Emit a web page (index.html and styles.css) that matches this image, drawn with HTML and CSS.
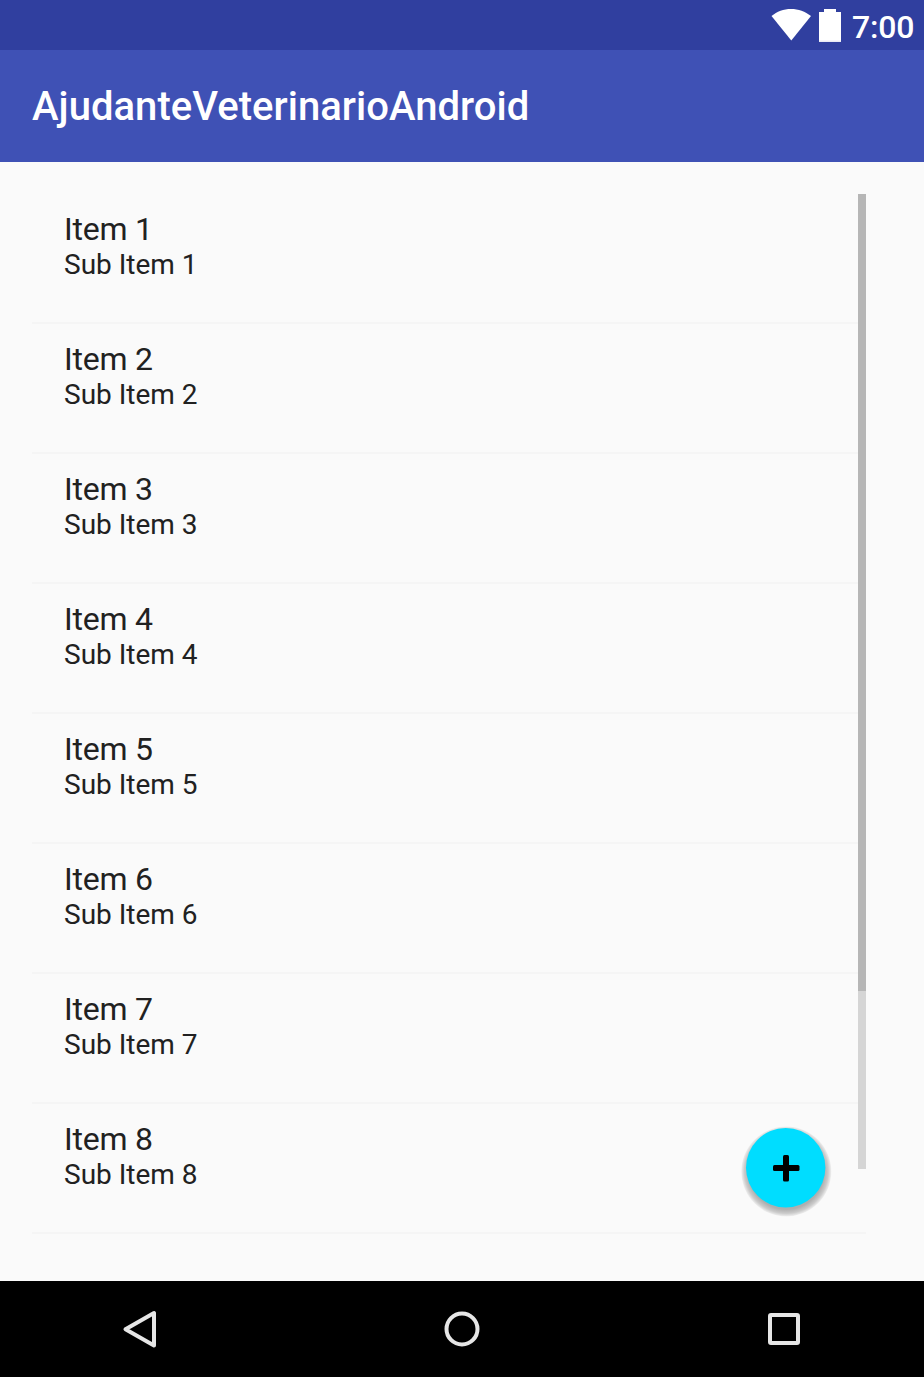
FILE: index.html
```html
<!DOCTYPE html>
<html lang="pt">
<head>
<meta charset="utf-8">
<title>AjudanteVeterinarioAndroid</title>
<link rel="stylesheet" href="styles.css">
</head>
<body>
<div class="screen">
  <div class="status-bar">
    <svg class="wifi" width="40" height="32" viewBox="0 0 40 32"><path d="M0.500 7C6 2.500 12.500 0 20 0S34 2.500 40 7L20.300 31.500Z" fill="#fff"/></svg>
    <svg class="battery" width="22" height="33" viewBox="0 0 22 33"><path d="M0 3H5V0H17V3H22V33H0Z" fill="#fff"/><path d="M0 31.500H22V33H0Z" fill="#e8e9f3"/></svg>
    <span class="clock">7:00</span>
  </div>
  <header class="app-bar"><h1 class="title">AjudanteVeterinarioAndroid</h1></header>
  <main class="content">
    <ul class="list">
      <li class="item"><span class="name">Item 1</span><span class="sub">Sub Item 1</span></li>
      <li class="item"><span class="name">Item 2</span><span class="sub">Sub Item 2</span></li>
      <li class="item"><span class="name">Item 3</span><span class="sub">Sub Item 3</span></li>
      <li class="item"><span class="name">Item 4</span><span class="sub">Sub Item 4</span></li>
      <li class="item"><span class="name">Item 5</span><span class="sub">Sub Item 5</span></li>
      <li class="item"><span class="name">Item 6</span><span class="sub">Sub Item 6</span></li>
      <li class="item"><span class="name">Item 7</span><span class="sub">Sub Item 7</span></li>
      <li class="item"><span class="name">Item 8</span><span class="sub">Sub Item 8</span></li>
    </ul>
    <div class="scrollbar"><div class="thumb"></div></div>
    <button class="fab" aria-label="Adicionar">
      <svg class="fab-art" width="80" height="80" viewBox="0 0 80 80">
        <defs>
          <radialGradient id="shade" gradientUnits="userSpaceOnUse" cx="40.300" cy="43.500" r="45">
            <stop offset="0.840" stop-opacity="0.300"/>
            <stop offset="0.930" stop-opacity="0.190"/>
            <stop offset="1" stop-opacity="0.040"/>
          </radialGradient>
        </defs>
        <circle cx="40.300" cy="43.500" r="45" fill="url(#shade)"/>
        <circle cx="39.700" cy="39.700" r="39.700" fill="#0df"/>
        <rect x="37" y="27" width="6" height="26.500" rx="1.500"/>
        <rect x="27" y="37" width="26.500" height="6" rx="1.500"/>
      </svg>
    </button>
  </main>
  <nav class="nav-bar">
    <svg class="nav-icon" width="40" height="44" viewBox="0 0 40 44"><path d="M34 6V38.500L5.500 22.300Z"/></svg>
    <svg class="nav-icon" width="40" height="44" viewBox="0 0 40 44"><circle cx="20" cy="22" r="15.500"/></svg>
    <svg class="nav-icon" width="40" height="44" viewBox="0 0 40 44"><rect x="6" y="8" width="28" height="28" rx="1"/></svg>
  </nav>
</div>
</body>
</html>
```
FILE: styles.css
```css
* { box-sizing: border-box; }
body { margin: 0; font-family: Roboto, sans-serif; }
.screen {
  display: flex;
  flex-direction: column;
  width: 924px;
  height: 1377px;
  overflow: hidden;
  background: #fafafa;
}
.status-bar {
  display: flex;
  justify-content: flex-end;
  align-items: flex-start;
  height: 50px;
  padding: 9px 9px 0 0;
  background: #303f9f;
  color: #fff;
}
.battery { margin: 0 11px 0 8px; }
.clock {
  width: 63px;
  font-size: 32px;
  line-height: 36px;
  font-weight: 500;
  letter-spacing: -0.2px;
}
.app-bar {
  display: flex;
  align-items: center;
  height: 112px;
  padding: 2px 0 0 32px;
  background: #3f51b5;
  color: #fff;
}
.title {
  margin: 0;
  font-size: 40px;
  line-height: 48px;
  font-weight: 500;
  letter-spacing: 0.04px;
}
.content {
  position: relative;
  display: flex;
  flex: 1;
  padding: 32px 58px 0 32px;
}
.list {
  flex: 1;
  margin: 0;
  padding: 0;
  list-style: none;
}
.item {
  display: flex;
  flex-direction: column;
  height: 130px;
  padding: 16px 32px 0;
  border-bottom: 2px solid #f5f5f5;
  color: #212121;
}
.name { font-size: 32px; line-height: 38px; letter-spacing: -0.22px; }
.sub { font-size: 28px; line-height: 33px; }
.scrollbar {
  position: absolute;
  top: 32px;
  right: 58px;
  width: 8px;
  height: 975px;
  background: #d5d5d5;
}
.thumb { height: 797px; background: #b6b6b6; }
.fab {
  position: absolute;
  top: 966px;
  left: 746px;
  display: flex;
  width: 80px;
  height: 80px;
  padding: 0;
  border: 0;
  background: none;
}
.fab-art { overflow: visible; }
.nav-bar {
  display: flex;
  align-items: center;
  justify-content: space-between;
  height: 96px;
  padding: 0 120px;
  background: #000;
}
.nav-icon {
  fill: none;
  stroke: #e6e6e6;
  stroke-width: 4;
  stroke-linejoin: round;
}
```
